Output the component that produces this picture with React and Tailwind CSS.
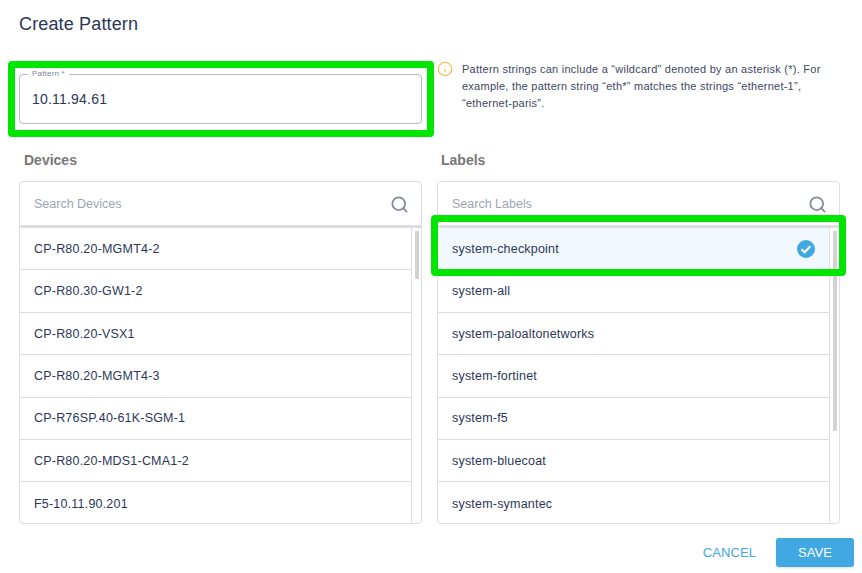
import { Search, Info } from 'lucide-react';

const devices = [
  'CP-R80.20-MGMT4-2',
  'CP-R80.30-GW1-2',
  'CP-R80.20-VSX1',
  'CP-R80.20-MGMT4-3',
  'CP-R76SP.40-61K-SGM-1',
  'CP-R80.20-MDS1-CMA1-2',
  'F5-10.11.90.201',
];

const labels = [
  'system-checkpoint',
  'system-all',
  'system-paloaltonetworks',
  'system-fortinet',
  'system-f5',
  'system-bluecoat',
  'system-symantec',
];

const CheckBadge = () => (
  <svg width="18" height="18" viewBox="0 0 18 18" className="shrink-0">
    <circle cx="9" cy="9" r="9" fill="#41a8e2" />
    <path d="M4.6 9.4l3 2.8L13.4 6.2" fill="none" stroke="#fff" strokeWidth="2.2" />
  </svg>
);

const ListPanel = ({ placeholder, items, selected, thumbClass }) => (
  <div className="h-[343px] flex flex-col rounded border border-[#dcdee2] overflow-hidden">
    <div className="h-[43px] shrink-0 flex items-center justify-between pl-[14px] pr-[12px] border-b-[3px] border-[#dcdee2] box-content">
      <span className="pt-[1px] text-[12.5px] text-[#9ea3b4]">{placeholder}</span>
      <Search size={19} strokeWidth={2.3} className="mt-[1px] text-[#858b99]" />
    </div>
    <div className="flex-1 flex min-h-0">
      <div className="flex-1 min-w-0 border-r border-[#dcdee2]">
        {items.map((item) => (
          <div
            key={item}
            className={`h-[42.4px] flex items-center justify-between pt-[1px] pl-[14px] pr-[14px] border-b border-[#dcdee2] last:border-b-0 text-[12.5px] tracking-[0.2px] text-[#2c3659] ${
              item === selected ? 'bg-[#f1f9fe]' : ''
            }`}
          >
            {item}
            {item === selected && <CheckBadge />}
          </div>
        ))}
      </div>
      <div className="w-[9px] shrink-0 pl-[3px] pr-[2px] pt-[3px]">
        <div className={`bg-[#d3d3d3] ${thumbClass}`} />
      </div>
    </div>
  </div>
);

export default function App() {
  return (
    <div className="relative w-[862px] h-[573px] overflow-hidden bg-white pl-[19px] pr-[22px] font-['Liberation_Sans',sans-serif]">
      <h1 className="pt-[13px] h-[74px] text-[18px] leading-[22px] tracking-[0.15px] text-[#2c3659]">Create Pattern</h1>

      <div className="grid grid-cols-[403px_403px] gap-x-[15px] h-[86px]">
        <div className="relative h-[50px] rounded border border-[#b9bbc0] flex items-center pl-[12px] text-[14px] tracking-[0.2px] text-[#2c3659]">
          <span className="absolute -top-[6px] left-[8px] bg-white px-[4px] text-[8px] leading-[10px] text-[#80869a]">Pattern *</span>
          10.11.94.61
        </div>
        <div className="flex items-start gap-[9px] -mt-[12px]">
          <Info size={16} strokeWidth={1.6} className="text-[#f0b93a] shrink-0 -mt-[1px]" />
          <p className="text-[11px] leading-[16.8px] tracking-[0.25px] text-[#3d4663] -mt-[1px]">
            Pattern strings can include a “wildcard” denoted by an asterisk (*). For example, the pattern string “eth*” matches the strings “ethernet-1”, “ethernet-paris”.
          </p>
        </div>
      </div>

      <div className="grid grid-cols-[403px_403px] gap-x-[15px]">
        <div>
          <h2 className="text-[14px] leading-[16px] h-[21px] pl-[5px] font-bold text-[#777777] -mt-[8px] mb-[8px]">Devices</h2>
          <ListPanel placeholder="Search Devices" items={devices} thumbClass="h-[48px]" />
        </div>
        <div>
          <h2 className="text-[14px] leading-[16px] h-[21px] pl-[4px] font-bold text-[#777777] -mt-[8px] mb-[8px]">Labels</h2>
          <ListPanel placeholder="Search Labels" items={labels} selected="system-checkpoint" thumbClass="h-[200px]" />
        </div>
      </div>

      <div className="flex justify-end items-center gap-[20px] mt-[14px] -mr-[14px]">
        <span className="text-[13px] tracking-[0.1px] text-[#41a8e2]">CANCEL</span>
        <span className="w-[78px] h-[29px] rounded-[3px] bg-[#41a8e2] shadow-sm flex items-center justify-center text-[13px] tracking-[0.1px] text-white">SAVE</span>
      </div>

      {/* green annotation boxes drawn on top of the screenshot */}
      <div className="absolute left-[8px] top-[61px] w-[426px] h-[76px] rounded border-[7px] border-[#00e600]" />
      <div className="absolute left-[431px] top-[215px] w-[415px] h-[61px] rounded border-[7px] border-[#00e600]" />
    </div>
  );
}
